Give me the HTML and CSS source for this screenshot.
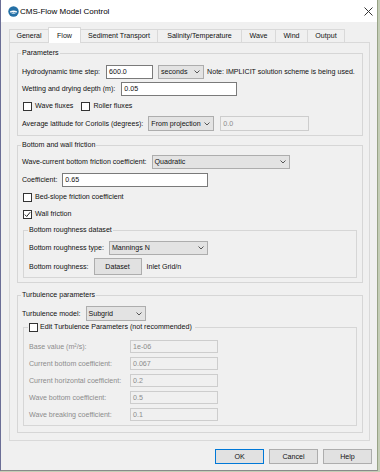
FILE: index.html
```html
<!DOCTYPE html>
<html lang="en">
<head>
  <meta charset="UTF-8">
  <title>CMS-Flow Model Control</title>
  <link rel="stylesheet" href="styles.css">
</head>
<body>

<div class="window">
  <div class="titlebar">
    <svg class="app-icon" width="11" height="11" viewBox="0 0 11 11">
      <circle cx="5.5" cy="5.5" r="5.2" fill="#2470a6"/>
      <path d="M2 5.2 Q5.5 3.6 9 5.2 L8.6 6.6 Q5.5 9.4 2.4 6.6 Z" fill="#fff"/>
      <path d="M3.2 6.3 Q5.5 7.6 7.8 6.3" stroke="#2470a6" stroke-width="0.8" fill="none"/>
    </svg>
    <span class="title">CMS-Flow Model Control</span>
    <svg class="close" width="9" height="9" viewBox="0 0 9 9">
      <path d="M0.5 0.5 L8.5 8.5 M8.5 0.5 L0.5 8.5" stroke="#333" stroke-width="1"/>
    </svg>
  </div>

  <div class="tabs">
    <div class="tab w-general">General</div>
    <div class="tab active w-flow">Flow</div>
    <div class="tab w-sed">Sediment Transport</div>
    <div class="tab w-sal">Salinity/Temperature</div>
    <div class="tab w-wave">Wave</div>
    <div class="tab w-wind">Wind</div>
    <div class="tab w-output">Output</div>
  </div>

  <div class="panel">
    <!-- Parameters -->
    <fieldset class="group g-params">
      <legend>Parameters</legend>
      <div class="row">
        <span>Hydrodynamic time step:</span>
        <span class="edit w-step">600.0</span>
        <span class="combo w-units">seconds<svg class="chev" width="6" height="4" viewBox="0 0 6 4"><path d="M0.5 0.5 L3 3 L5.5 0.5" stroke="#555" fill="none"/></svg></span>
        <span class="note">Note: IMPLICIT solution scheme is being used.</span>
      </div>
      <div class="row mt3">
        <span>Wetting and drying depth (m):</span>
        <span class="edit w-depth">0.05</span>
      </div>
      <div class="row mt3">
        <label class="check"><span class="box"></span>Wave fluxes</label>
        <label class="check"><span class="box"></span>Roller fluxes</label>
      </div>
      <div class="row tall mt3">
        <span>Average latitude for Coriolis (degrees):</span>
        <span class="combo w-proj">From projection<svg class="chev" width="6" height="4" viewBox="0 0 6 4"><path d="M0.5 0.5 L3 3 L5.5 0.5" stroke="#555" fill="none"/></svg></span>
        <span class="edit disabled w-lat">0.0</span>
      </div>
    </fieldset>

    <!-- Bottom and wall friction -->
    <fieldset class="group g-friction">
      <legend>Bottom and wall friction</legend>
      <div class="row">
        <span>Wave-current bottom friction coefficient:</span>
        <span class="combo w-quad">Quadratic<svg class="chev" width="6" height="4" viewBox="0 0 6 4"><path d="M0.5 0.5 L3 3 L5.5 0.5" stroke="#555" fill="none"/></svg></span>
      </div>
      <div class="row mt4">
        <span>Coefficient:</span>
        <span class="edit w-coef">0.65</span>
      </div>
      <div class="row mt3">
        <label class="check"><span class="box"></span>Bed-slope friction coefficient</label>
      </div>
      <div class="row mt3">
        <label class="check"><span class="box checked"><svg width="7" height="7" viewBox="0 0 7 7"><path d="M0.8 3.6 L2.7 5.5 L6.2 1.2" stroke="#222" stroke-width="1" fill="none"/></svg></span>Wall friction</label>
      </div>
      <fieldset class="group inner g-dataset">
        <legend>Bottom roughness dataset</legend>
        <div class="row">
          <span>Bottom roughness type:</span>
          <span class="combo w-mann">Mannings N<svg class="chev" width="6" height="4" viewBox="0 0 6 4"><path d="M0.5 0.5 L3 3 L5.5 0.5" stroke="#555" fill="none"/></svg></span>
        </div>
        <div class="row btn-row mt3">
          <span>Bottom roughness:</span>
          <span class="button w-dataset">Dataset</span>
          <span>Inlet Grid/n</span>
        </div>
      </fieldset>
    </fieldset>

    <!-- Turbulence parameters -->
    <fieldset class="group g-turb">
      <legend>Turbulence parameters</legend>
      <div class="row tall">
        <span>Turbulence model:</span>
        <span class="combo w-model">Subgrid<svg class="chev" width="6" height="4" viewBox="0 0 6 4"><path d="M0.5 0.5 L3 3 L5.5 0.5" stroke="#555" fill="none"/></svg></span>
      </div>
      <fieldset class="group inner g-edit">
        <legend><label class="check"><span class="box"></span>Edit Turbulence Parameters (not recommended)</label></legend>
        <div class="row dis">
          <span class="dlabel">Base value (m²/s):</span>
          <span class="edit disabled w-param">1e-06</span>
        </div>
        <div class="row dis mt4">
          <span class="dlabel">Current bottom coefficient:</span>
          <span class="edit disabled w-param">0.067</span>
        </div>
        <div class="row dis mt4">
          <span class="dlabel">Current horizontal coefficient:</span>
          <span class="edit disabled w-param">0.2</span>
        </div>
        <div class="row dis mt4">
          <span class="dlabel">Wave bottom coefficient:</span>
          <span class="edit disabled w-param">0.5</span>
        </div>
        <div class="row dis mt4">
          <span class="dlabel">Wave breaking coefficient:</span>
          <span class="edit disabled w-param">0.1</span>
        </div>
      </fieldset>
    </fieldset>
  </div>

  <div class="actions">
    <span class="button default">OK</span>
    <span class="button">Cancel</span>
    <span class="button">Help</span>
  </div>
</div>

</body>
</html>
```

FILE: styles.css
```css
* {
  box-sizing: border-box;
}

body {
  margin: 0;
  background: #c4cdb6;
  font-family: "Liberation Sans", Arial, sans-serif;
  font-size: 7.1px;
  color: #111;
}

.window {
  width: 378px;
  height: 471px;
  background: #f0f0f0;
  border-left: 1px solid #6b6e96;
  border-right: 1px solid #98a387;
  border-bottom: 1px solid #8a8a8a;
  display: flex;
  flex-direction: column;
}

/* title bar */
.titlebar {
  height: 22px;
  background: #fff;
  display: flex;
  align-items: center;
  padding: 0 4px 0 7px;
}

.app-icon {
  flex: none;
}

.title {
  margin-left: 1px;
  font-size: 8px;
  color: #000;
}

.close {
  margin-left: auto;
}

/* tabs */
.tabs {
  height: 20px;
  display: flex;
  align-items: flex-end;
  padding-left: 8px;
}

.tab {
  height: 13px;
  border: 1px solid #d9d9d9;
  border-bottom: none;
  margin-right: -1px;
  display: flex;
  align-items: center;
  justify-content: center;
  background: #f0f0f0;
}

.tab.active {
  height: 16px;
  margin-bottom: -1px;
  background: #fff;
  position: relative;
  z-index: 1;
}

.w-general { width: 40px; }
.w-flow { width: 33px; }
.w-sed { width: 78px; }
.w-sal { width: 85px; }
.w-wave { width: 35px; }
.w-wind { width: 33px; }
.w-output { width: 38px; }

/* page of the tab */
.panel {
  margin-left: 8px;
  width: 361px;
  height: 399px;
  border: 1px solid #d9d9d9;
  padding: 0 6px 0 7px;
}

.group {
  margin: 0;
  min-width: 0;
  border: 1px solid #d6d6d6;
  padding: 0 5px 0 4px;
}

.group legend {
  padding: 0 1px;
  margin-left: -1px;
  line-height: 9px;
  height: 9px;
}

.g-params {
  margin-top: 6px;
  padding-top: 7px;
  padding-bottom: 4px;
}

.g-friction {
  margin-top: 5px;
  padding-top: 5px;
  padding-bottom: 4px;
}

.group.inner {
  margin-left: 1px;
  padding-left: 5px;
}

.g-dataset {
  margin-top: 5px;
  padding-top: 6px;
  padding-bottom: 2px;
}

.g-turb {
  margin-top: 8px;
  padding-top: 6px;
  padding-bottom: 6px;
}

.g-edit {
  margin-top: 2px;
  padding-top: 8px;
  padding-bottom: 4px;
}

.g-edit legend {
  display: flex;
}

/* rows */
.row {
  display: flex;
  align-items: center;
  height: 14px;
  gap: 5px;
  white-space: nowrap;
}

.row.tall {
  height: 15px;
}

.row.btn-row {
  height: 17px;
}

.row.dis {
  height: 13px;
  color: #8c8c8c;
}

.mt3 { margin-top: 3px; }
.mt4 { margin-top: 4px; }

.dlabel {
  width: 95px;
}

.note {
  margin-left: -2px;
}

/* controls */
.edit {
  height: 100%;
  background: #fff;
  border: 1px solid #7a7a7a;
  padding-left: 2px;
  display: flex;
  align-items: center;
  margin-left: 1px;
}

.edit.disabled {
  background: #f0f0f0;
  border-color: #cdcdcd;
  color: #8c8c8c;
}

.combo {
  height: 100%;
  background: #e3e3e3;
  border: 1px solid #adadad;
  padding: 0 3px 0 2px;
  display: flex;
  align-items: center;
  justify-content: space-between;
}

.chev {
  flex: none;
}

.w-step { width: 47px; }
.w-units { width: 46px; }
.w-depth { width: 116px; }
.w-proj { width: 66px; }
.w-lat { width: 89px; }
.w-quad { width: 138px; }
.w-coef { width: 146px; margin-left: 0; }
.w-mann { width: 99px; }
.w-dataset { width: 48px; height: 17px; }
.w-model { width: 60px; }
.w-param { width: 88px; height: 13px; }

.check {
  display: flex;
  align-items: center;
  gap: 3px;
  margin-right: 2px;
}

.box {
  width: 9px;
  height: 9px;
  border: 1px solid #333;
  background: #fff;
  margin-left: 1px;
  display: flex;
  align-items: center;
  justify-content: center;
}

.g-edit .check {
  gap: 2px;
}

.g-edit .box {
  margin-left: 0;
}

.button {
  background: #e1e1e1;
  border: 1px solid #adadad;
  display: flex;
  align-items: center;
  justify-content: center;
}

/* dialog buttons */
.actions {
  display: flex;
  justify-content: flex-end;
  gap: 5px;
  margin-top: 8px;
  padding-right: 5px;
}

.actions .button {
  width: 49px;
  height: 15px;
}

.actions .button.default {
  border-color: #0078d7;
}
```
